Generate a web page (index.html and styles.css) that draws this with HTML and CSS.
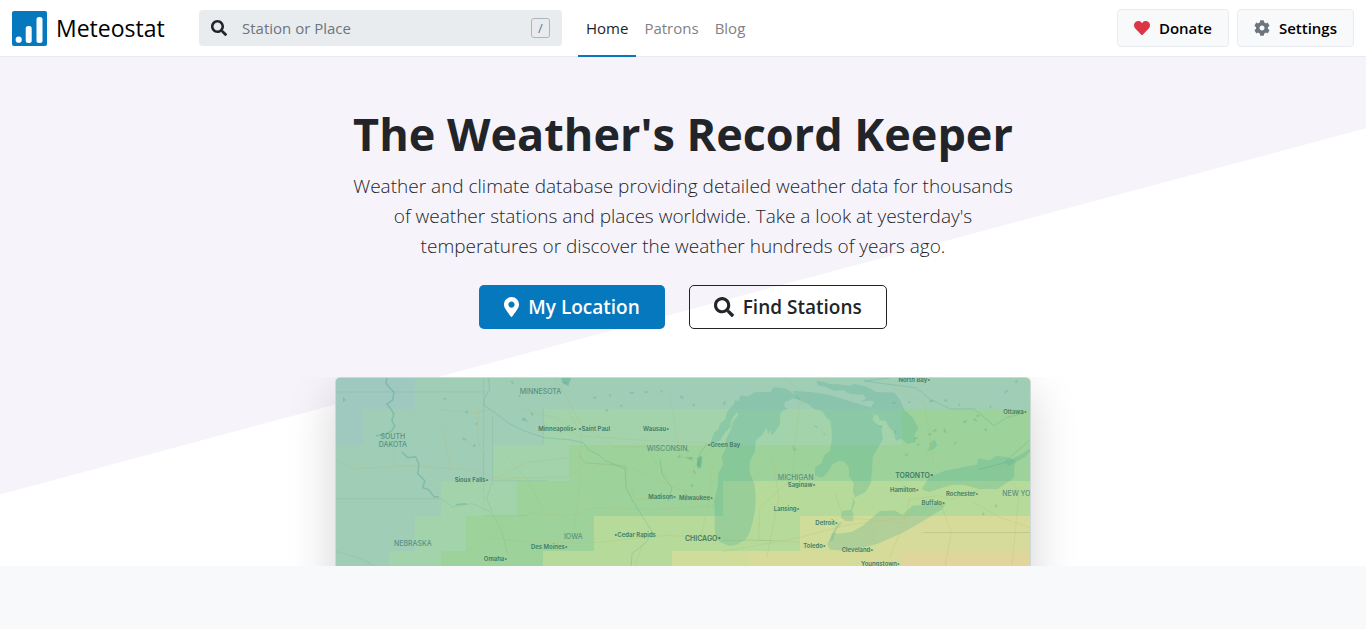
FILE: index.html
```html
<!DOCTYPE html>
<html lang="en">
<head>
<meta charset="utf-8">
<meta name="viewport" content="width=device-width, initial-scale=1">
<title>Meteostat</title>
<link rel="stylesheet" href="styles.css">
</head>
<body>
<header class="navbar">
  <a class="brand" href="#">
    <svg class="brand-logo" viewBox="0 0 35 35" aria-hidden="true">
      <rect width="35" height="35" rx="2" fill="#0678be"/>
      <circle cx="6.700" cy="28.700" r="3.100" fill="#fff"/>
      <rect x="13.700" y="15" width="6" height="17" rx="2.500" fill="#fff"/>
      <rect x="24.500" y="6" width="6" height="26" rx="2.500" fill="#fff"/>
    </svg>
    <span>Meteostat</span>
  </a>
  <form class="search" role="search">
    <label class="search-label" for="q" aria-label="Search">
      <svg class="icon" viewBox="0 0 512 512" aria-hidden="true"><path d="M505 442.7L405.3 343c-4.500-4.500-10.600-7-17-7H372c27.600-35.300 44-79.700 44-128C416 93.100 322.900 0 208 0S0 93.100 0 208s93.100 208 208 208c48.300 0 92.700-16.400 128-44v16.300c0 6.400 2.500 12.500 7 17l99.700 99.700c9.400 9.400 24.600 9.400 33.900 0l28.300-28.300c9.400-9.400 9.400-24.600.1-34zM208 336c-70.700 0-128-57.200-128-128 0-70.700 57.200-128 128-128 70.700 0 128 57.200 128 128 0 70.700-57.200 128-128 128z"/></svg>
    </label>
    <input class="search-input" id="q" type="text" placeholder="Station or Place">
    <kbd class="search-key">/</kbd>
  </form>
  <nav class="nav">
    <a class="nav-link active" href="#">Home</a>
    <a class="nav-link" href="#">Patrons</a>
    <a class="nav-link" href="#">Blog</a>
  </nav>
  <div class="actions">
    <button class="btn btn-light" type="button">
      <svg class="icon icon-heart" viewBox="0 0 512 512" aria-hidden="true"><path d="M462.3 62.600C407.500 15.900 326 24.300 275.700 76.200L256 96.500l-19.700-20.300C186.100 24.300 104.500 15.900 49.700 62.600c-62.800 53.600-66.100 149.800-9.900 207.900l193.500 199.800c12.500 12.900 32.800 12.900 45.300 0l193.500-199.800c56.300-58.100 53-154.300-9.800-207.900z"/></svg>
      Donate
    </button>
    <button class="btn btn-light" type="button">
      <svg class="icon icon-cog" viewBox="0 0 512 512" aria-hidden="true"><path d="M487.4 315.700l-42.600-24.600c4.300-23.200 4.300-47 0-70.200l42.600-24.600c4.900-2.800 7.100-8.600 5.500-14-11.100-35.600-30-67.800-54.700-94.600-3.800-4.100-10-5.100-14.800-2.300L380.800 110c-17.900-15.400-38.500-27.300-60.800-35.100V25.800c0-5.600-3.900-10.500-9.400-11.700-36.700-8.200-74.300-7.800-109.200 0-5.500 1.200-9.400 6.100-9.400 11.700V75c-22.200 7.900-42.800 19.800-60.800 35.100L88.700 85.500c-4.900-2.800-11-1.900-14.800 2.300-24.700 26.700-43.600 58.900-54.700 94.600-1.700 5.400.6 11.200 5.500 14L67.300 221c-4.300 23.200-4.300 47 0 70.200l-42.600 24.600c-4.900 2.800-7.100 8.600-5.500 14 11.100 35.600 30 67.800 54.700 94.600 3.800 4.100 10 5.100 14.800 2.300l42.600-24.600c17.900 15.400 38.500 27.300 60.800 35.100v49.200c0 5.600 3.900 10.500 9.400 11.700 36.700 8.200 74.300 7.800 109.200 0 5.500-1.200 9.400-6.100 9.400-11.700v-49.200c22.200-7.900 42.800-19.800 60.800-35.100l42.600 24.600c4.900 2.800 11 1.900 14.800-2.300 24.700-26.700 43.600-58.900 54.700-94.600 1.500-5.500-.7-11.300-5.600-14.100zM256 336c-44.100 0-80-35.900-80-80s35.900-80 80-80 80 35.900 80 80-35.900 80-80 80z"/></svg>
      Settings
    </button>
  </div>
</header>
<main class="hero">
  <h1 class="hero-title">The Weather's Record Keeper</h1>
  <p class="hero-lead">Weather and climate database providing detailed weather data for thousands of weather stations and places worldwide. Take a look at yesterday's temperatures or discover the weather hundreds of years ago.</p>
  <div class="hero-actions">
    <button class="btn btn-lg btn-primary" type="button">
      <svg class="icon icon-pin" viewBox="0 0 384 512" aria-hidden="true"><path d="M172.268 501.670C26.970 291.031 0 269.413 0 192 0 85.961 85.961 0 192 0s192 85.961 192 192c0 77.413-26.970 99.031-172.268 309.670-9.535 13.774-29.930 13.773-39.464 0zM192 272c44.183 0 80-35.817 80-80s-35.817-80-80-80-80 35.817-80 80 35.817 80 80 80z"/></svg>
      My Location
    </button>
    <button class="btn btn-lg btn-outline" type="button">
      <svg class="icon" viewBox="0 0 512 512" aria-hidden="true"><path d="M505 442.7L405.3 343c-4.500-4.500-10.600-7-17-7H372c27.600-35.300 44-79.700 44-128C416 93.100 322.900 0 208 0S0 93.100 0 208s93.100 208 208 208c48.300 0 92.700-16.400 128-44v16.300c0 6.400 2.500 12.500 7 17l99.700 99.700c9.400 9.400 24.600 9.400 33.900 0l28.300-28.300c9.400-9.400 9.400-24.600.1-34zM208 336c-70.700 0-128-57.200-128-128 0-70.700 57.200-128 128-128 70.700 0 128 57.200 128 128 0 70.700-57.200 128-128 128z"/></svg>
      Find Stations
    </button>
  </div>
  <div class="map-frame">
    <svg class="map" viewBox="0 0 696 240" role="img" aria-label="Temperature map of the Great Lakes region">
      <!-- temperature cells -->
      <g shape-rendering="crispEdges">
        <rect width="696" height="240" fill="#a0cdb5"/>
        <path fill="#9fc8bf" d="M0 0H79V31H27V67H0z"/>
        <path fill="#a2d3ab" d="M208 31H568V67H234V103H182V138H130V174H105V240H53V174H79V138H105V103H157V67H208z"/>
        <path fill="#9dd29a" d="M568 31H696V103H388V138H259V174H208V240H105V174H130V138H182V103H234V67H568z"/>
        <path fill="#b5da99" d="M388 103H696V138H465V174H337V240H208V174H259V138H388z"/>
        <path fill="#d0dc99" d="M465 138H543V174H413V240H337V174H465z"/>
        <path fill="#d7db9a" d="M543 138H696V174H568V240H413V174H543z"/>
        <path fill="#e0d59a" d="M568 174H696V240H568z"/>
      </g>
      <!-- lakes -->
      <g fill="#46aa96" fill-opacity=".25" transform="translate(365 -18) scale(.33333)">
        <path d="M30 255L43 217 55 209 60 192 76 178 82 155 102 133 106 120 117 124 122 107 145 110 164 97 213 96 222 82 256 85 290 106 304 120 279 116 255 128 254 141 265 146 246 155 240 170 241 192 229 212 216 226 211 211 205 224 201 203 187 225 168 242 165 275 150 305 149 337 163 370 168 410 166 448 159 486 149 520 137 540 112 555 89 559 65 550 47 537 44 500 45 455 42 428 53 382 56 339 70 314 65 291 78 265 78 240 92 211 99 185 117 164 110 158 94 182 91 202 77 216 61 241 46 249z"/>
        <path d="M280 92L331 96 385 104 432 118 472 130 511 142 523 166 519 181 546 202 550 238 538 260 520 291 517 340 514 370 498 397 467 413 460 395 463 371 449 350 447 320 434 305 416 304 398 315 382 341 366 354 346 347 346 323 367 309 374 286 390 275 397 241 396 207 392 180 381 175 369 155 341 146 326 132 312 127 294 117z"/>
        <path d="M512 145L526 125 508 122 482 127 501 115 491 104 452 102 431 91 404 93 381 82 354 76 351 62 374 67 389 72 419 73 450 78 463 72 502 80 530 96 585 98 601 118 615 150 640 172 658 206 645 225 649 247 624 252 606 237 590 243 581 213 571 205 559 183 541 181 535 164 526 166z"/>
        <path d="M667 389L690 353 735 334 801 320 833 315 838 295 872 302 890 289 923 292 950 302 945 328 946 350 932 364 895 388 840 388 793 375 755 376 717 388 690 397z"/>
        <path d="M740 430L728 450 672 484 612 519 535 553 490 565 430 573 391 570 383 556 399 518 415 523 456 517 489 499 541 454 586 453 610 466 640 438 702 436z"/>
        <path d="M427 455L456 450 462 466 460 485 438 484 424 474zM462 411L466 430 457 453 454 449 460 427zM390 546L402 516 408 501 422 487 426 490 410 512 400 543zM930 318L978 292 993 275V267L965 285 912 308zM-2 300L6 290 5 312-4 330-12 316z"/>
        <path d="M278 255L287 264 291 272 281 274zM341 196L354 199 351 206zM68 129L79 120 75 139zM371 219L378 223 373 228zM690 250L706 240 714 257 704 268 682 275 691 262z"/>
      </g>
      <!-- roads and state borders -->
      <g fill="none" stroke="#b5bd74" stroke-opacity=".28" stroke-width="1">
        <path d="M0 82L17 91 80 88 132 92 165 101 232 99 254 85 300 91 340 110 388 125M58 70V88M105 32L142 35 156 31M106 50L112 75 115 94M143 31L142 60 148 80V130M157 102L190 85 232 80M170 77L190 100 212 138M186 30L222 41 244 58 300 62 372 65M232 32L246 56 244 110 239 152M193 135L232 138 260 130 318 132 380 128M130 174L152 160 186 164 250 166 330 158 388 160 465 165M308 165L300 188M220 0L245 45 278 69 310 69 333 102M335 18L345 79 374 82 377 105 366 160M340 110L380 66M294 105L300 121 320 121M450 0L467 14 460 65 458 100 425 130 424 162M438 80L444 120 432 180M500 115L509 140 570 145 575 122 604 118 617 122 650 110 690 75M570 145L555 180M388 174L465 160 510 148 570 140 595 120M606 125L617 155 611 188M640 125L666 140 696 150M590 155H696M665 86L685 115 678 188M560 10L590 25 600 90"/>
      </g>
      <g fill="none" stroke="#648f80" stroke-opacity=".14" stroke-width="1">
        <path d="M0 14H148M0 121H105M157 38V103H212M148 0V100M148 138H192M208 31V67M244 77L250 85 291 88 292 93M0 174L25 181 38 188M105 121L117 129 137 126 154 134 160 141 167 156 172 177M157 103L151 121 157 135M388 163H440M587 155H696"/>
      </g>
      <!-- rivers and small lakes -->
      <g fill="none" stroke="#46a090" stroke-opacity=".36" stroke-width="1" stroke-linejoin="round">
        <path stroke-width="1.500" d="M51 0L50 5 54 10 58 14 57 22 51 26 55 31 58 36 56 43 59 48 56 53 48 57 40 58M66 74L72 80 80 79 83 86 82 96 89 103 87 110 93 112 98 119 103 119M120 127L131 126"/>
        <path stroke-opacity=".26" d="M153 0L154 11 149 20 148 27 161 36 173 45 186 52 209 60 235 62 248 65 253 72 265 78 270 83 290 91 291 110 297 122 308 140 317 154 311 165 297 176 296 188M333 124L337 110 327 97 325 82M372 66L365 76 363 90M555 0L530 3 582 10 594 20 616 31 640 31 660 48 672 40 690 35M644 92L670 85 696 62"/>
      </g>
      <g fill="none" stroke="#46a090" stroke-opacity=".26" stroke-width="2" stroke-dasharray="3 13 2 19 4 11">
        <path d="M130 33L142 47 128 61 140 66 131 79M108 22L120 12M176 3L185 20 198 38M229 4L240 12M258 20L292 15 337 13 360 28M270 33L295 25M343 80L352 70 361 100 347 130M545 48L580 61 620 49 650 35 684 2M558 25L620 22 660 60M571 78L606 48 626 71M649 138L652 125M661 127L669 138"/>
      </g>
      <g fill="#46a090" fill-opacity=".35">
        <path d="M226 0H236L233 8 227 5zM362 80L367 78 366 91 362 87zM350 80L357 79 358 83zM188 39L193 44 186 42zM7 19L10 22 7 24z"/>
      </g>
      <!-- place names -->
      <g class="map-region">
        <text x="57" y="61">SOUTH</text><text x="57" y="69">DAKOTA</text>
        <text x="205" y="16">MINNESOTA</text><text x="332" y="73">WISCONSIN</text>
        <text x="461" y="102">MICHIGAN</text><text x="77" y="168">NEBRASKA</text>
        <text x="238" y="161">IOWA</text><text x="687" y="118">NEW YORK</text>
      </g>
      <g class="map-capital">
        <text x="368" y="163">CHICAGO•</text><text x="580" y="100">TORONTO•</text>
      </g>
      <g class="map-city">
        <text x="222" y="53">Minneapolis•</text><text x="259" y="53">•Saint Paul</text>
        <text x="321" y="53">Wausau•</text><text x="389" y="69">•Green Bay</text>
        <text x="136" y="104">Sioux Falls•</text><text x="327" y="121">Madison•</text>
        <text x="361" y="122">Milwaukee•</text><text x="467" y="109">Saginaw•</text>
        <text x="452" y="133">Lansing•</text><text x="492" y="147">Detroit•</text>
        <text x="480" y="170">Toledo•</text><text x="523" y="175">Cleveland•</text>
        <text x="300" y="159">•Cedar Rapids</text><text x="214" y="172">Des Moines•</text>
        <text x="160" y="184">Omaha•</text><text x="546" y="189">Youngstown•</text>
        <text x="580" y="4">North Bay•</text><text x="681" y="36">Ottawa•</text>
        <text x="570" y="114">Hamilton•</text><text x="599" y="127">Buffalo•</text>
        <text x="628" y="118">Rochester•</text>
      </g>
    </svg>
  </div>
</main>
</body>
</html>
```
FILE: styles.css
```css
* {
  box-sizing: border-box;
}

body {
  margin: 0;
  background: #f8f9fa;
  color: #212529;
  font-family: "Open Sans", "Noto Sans", sans-serif;
  font-size: 15px;
  line-height: 24px;
}

a {
  color: inherit;
  text-decoration: none;
}

.icon {
  width: 16px;
  height: 16px;
  flex: none;
  fill: currentColor;
}

/* Top bar */
.navbar {
  display: flex;
  align-items: center;
  height: 57px;
  padding: 0 12px;
  background: #fff;
  border-bottom: 1px solid #e9ecef;
}

.brand {
  display: flex;
  align-items: center;
  gap: 9px;
  width: 187px;
  flex: none;
  color: #000;
  font-size: 23px;
  font-weight: 500;
  line-height: 36px;
}

.brand-logo {
  width: 35px;
  height: 35px;
}

.search {
  display: flex;
  align-items: center;
  flex: 0 1 363px;
  min-width: 0;
  height: 36px;
  padding: 0 12px;
  background: #e9ecef;
  border-radius: 4px;
}

.search-label {
  display: flex;
}

.search-input {
  flex: 1;
  min-width: 0;
  padding: 0 12px 0 15px;
  background: none;
  border: 0;
  outline: 0;
  color: inherit;
  font: inherit;
}

.search-input::placeholder {
  color: #6c757d;
  opacity: 1;
}

.search-key {
  width: 19px;
  height: 20px;
  border: 1px solid #adb5bd;
  border-radius: 3px;
  color: #6c757d;
  font-family: inherit;
  font-size: 13px;
  line-height: 18px;
  text-align: center;
}

.nav {
  display: flex;
  align-self: stretch;
  margin: 0 16px;
}

.nav-link {
  height: 57px;
  padding: 0 8px;
  color: #7f8183;
  line-height: 57px;
}

.nav-link.active {
  color: #212529;
  border-bottom: 2px solid #0678be;
}

.actions {
  display: flex;
  gap: 8px;
  margin-left: auto;
}

/* Buttons */
.btn {
  display: inline-flex;
  align-items: center;
  gap: 9px;
  height: 38px;
  padding: 0 16px;
  border: 1px solid transparent;
  border-radius: 4px;
  color: #000;
  font: inherit;
  font-weight: 600;
  cursor: pointer;
}

.btn-light {
  background: #f8f9fa;
  border-color: #e9ecef;
}

.icon-heart {
  color: #dc3545;
}

.icon-cog {
  color: #6c757d;
}

.btn-lg {
  height: 44px;
  padding: 0 24px;
  border-radius: 5px;
  font-size: 19px;
}

.btn-lg .icon {
  width: 20px;
  height: 20px;
}

.btn-lg .icon-pin {
  width: 15px;
}

.btn-primary {
  background: #0678be;
  color: #fff;
}

.btn-outline {
  background: transparent;
  border-color: #212529;
  color: #212529;
}

/* Hero */
.hero {
  position: relative;
  z-index: 0;
  display: flex;
  flex-direction: column;
  align-items: center;
  padding-top: 48px;
  background: #fff;
}

.hero::before {
  content: "";
  position: absolute;
  z-index: -1;
  inset: 0;
  background: #f6f3fb;
  clip-path: polygon(0 0, 100% 0, 100% 14%, 0 86%);
}

.hero-title {
  margin: 0 0 8px;
  font-size: 45px;
  font-weight: 700;
  line-height: 58px;
}

.hero-lead {
  max-width: 696px;
  margin: 0 0 24px;
  padding: 0 16px;
  font-size: 19px;
  font-weight: 300;
  line-height: 30px;
  text-align: center;
}

.hero-actions {
  display: flex;
  gap: 24px;
  margin-bottom: 48px;
}

.map-frame {
  width: 100%;
  max-width: 792px;
  max-height: 30vh;
  padding: 0 48px;
  overflow: hidden;
}

.map {
  display: block;
  width: 100%;
  border: 1px solid #ced8d6;
  border-radius: 5px;
  box-shadow: 0 16px 48px rgba(0, 0, 0, 0.175);
}

.map text {
  font-family: Inter, sans-serif;
  text-anchor: middle;
}

.map-region {
  fill: #5a9283;
  font-size: 7px;
  font-weight: 500;
}

.map-capital {
  fill: #427a66;
  font-size: 7px;
  font-weight: 600;
}

.map-city {
  fill: #427a66;
  font-size: 6px;
  font-weight: 600;
}
```
